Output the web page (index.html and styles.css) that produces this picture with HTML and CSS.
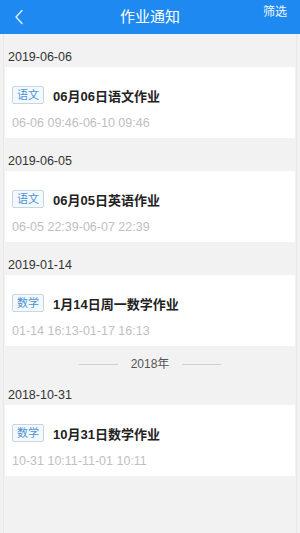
FILE: index.html
```html
<!DOCTYPE html>
<html lang="zh">
<head>
<meta charset="utf-8">
<title>作业通知</title>
<link rel="stylesheet" href="styles.css">
</head>
<body>
<header class="topbar">
  <span class="back">
    <svg width="12" height="16" viewBox="0 0 12 16"><path d="M9 1.5 L3 8 L9 14.5" fill="none" stroke="#dcebff" stroke-width="1.5" stroke-linecap="round" stroke-linejoin="round"/></svg>
  </span>
  <h1 class="title">作业通知</h1>
  <span class="filter">筛选</span>
</header>
<main class="list">
  <div class="date">2019-06-06</div>
  <div class="card">
    <div class="row"><span class="tag">语文</span><span class="name">06月06日语文作业</span></div>
    <div class="time">06-06 09:46-06-10 09:46</div>
  </div>
  <div class="date">2019-06-05</div>
  <div class="card">
    <div class="row"><span class="tag">语文</span><span class="name">06月05日英语作业</span></div>
    <div class="time">06-05 22:39-06-07 22:39</div>
  </div>
  <div class="date">2019-01-14</div>
  <div class="card">
    <div class="row"><span class="tag">数学</span><span class="name">1月14日周一数学作业</span></div>
    <div class="time">01-14 16:13-01-17 16:13</div>
  </div>
  <div class="year"><span class="line"></span><span class="year-text">2018年</span><span class="line"></span></div>
  <div class="date">2018-10-31</div>
  <div class="card">
    <div class="row"><span class="tag">数学</span><span class="name">10月31日数学作业</span></div>
    <div class="time">10-31 10:11-11-01 10:11</div>
  </div>
</main>
</body>
</html>
```
FILE: styles.css
```css
* { box-sizing: border-box; }
html, body { margin: 0; padding: 0; }
body {
  background: #f2f2f2;
  font-family: "Liberation Sans", "Noto Sans CJK SC", sans-serif;
  color: #333;
  height: 533px;
  overflow: hidden;
}
.topbar {
  height: 34px;
  background: #1f89f2;
  display: flex;
  align-items: center;
  position: relative;
  padding: 0 13px;
}
.back { display: flex; align-items: center; width: 12px; height: 16px; }
.title {
  flex: 1;
  margin: 0;
  text-align: center;
  font-size: 15px;
  font-weight: normal;
  color: #fff;
  line-height: 34px;
  padding-right: 12px;
}
.filter {
  position: absolute;
  right: 13px;
  top: 5px;
  font-size: 12px;
  line-height: 14px;
  color: #f2f8ff;
}
.list {
  margin: 0 3px;
  border-left: 1px solid #e8e8e8;
  border-right: 1px solid #e8e8e8;
  height: 499px;
}
.date {
  padding: 15px 4px 2px;
  font-size: 12.5px;
  line-height: 16px;
  color: #333;
}
.card {
  background: #fff;
  margin: 0 1px;
  padding: 19px 7px 8px;
}
.row { display: flex; align-items: center; height: 18px; }
.tag {
  width: 32px;
  height: 18px;
  border: 1px solid #c6d6e6;
  border-radius: 2px;
  background: #f4f9fd;
  color: #4a93d6;
  font-size: 11px;
  line-height: 16px;
  text-align: center;
}
.name {
  margin-left: 9px;
  font-size: 13px;
  font-weight: bold;
  color: #222;
}
.time {
  margin-top: 12px;
  font-size: 12.5px;
  line-height: 14px;
  color: #c0c0c0;
}
.year {
  display: flex;
  align-items: center;
  justify-content: center;
  padding-top: 10px;
  height: 26px;
}
.line { width: 39px; height: 1px; background: #cfcfcf; }
.year-text {
  margin: 0 13px;
  font-size: 12px;
  line-height: 16px;
  color: #555;
}
```
